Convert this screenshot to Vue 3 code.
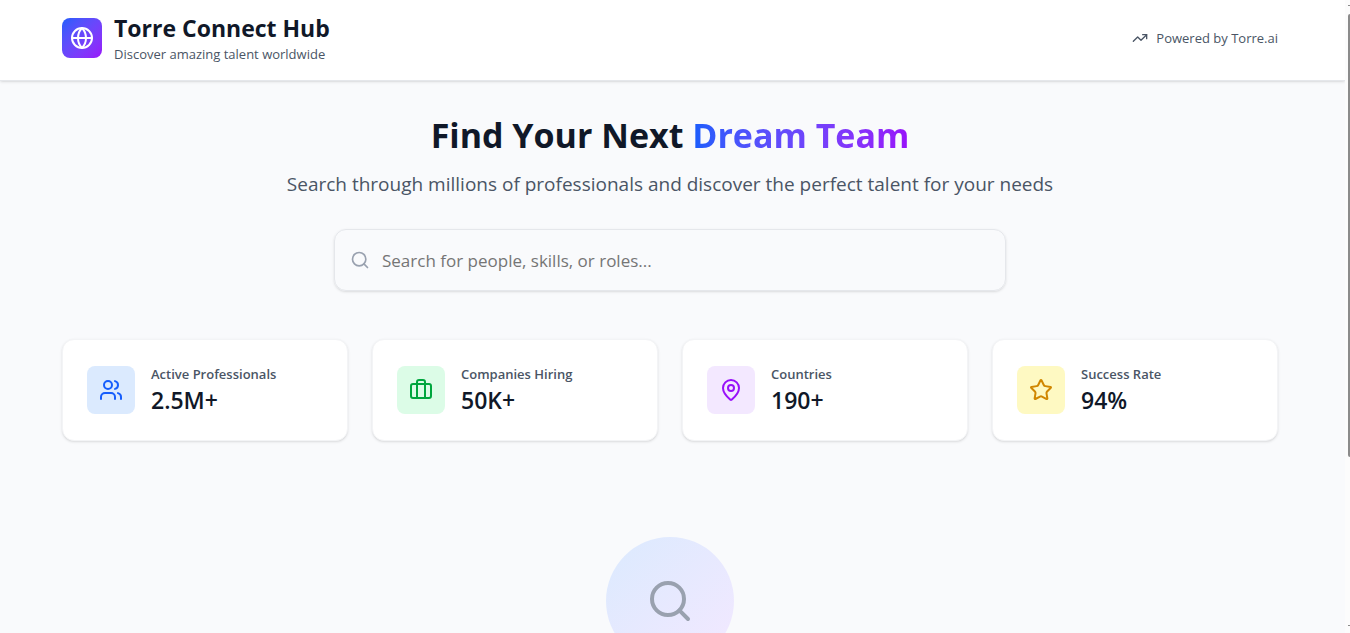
<script setup>
const stats = [
  { label: 'Active Professionals', value: '2.5M+', icon: 'users', tone: 'blue' },
  { label: 'Companies Hiring', value: '50K+', icon: 'briefcase', tone: 'green' },
  { label: 'Countries', value: '190+', icon: 'pin', tone: 'purple' },
  { label: 'Success Rate', value: '94%', icon: 'star', tone: 'yellow' },
]
</script>

<template>
  <div class="page">
    <header class="header">
      <div class="container header-row">
        <div class="brand">
          <div class="logo">
            <svg class="icon" viewBox="0 0 24 24" aria-hidden="true">
              <circle cx="12" cy="12" r="10" />
              <path d="M12 2a14.5 14.5 0 0 0 0 20 14.5 14.5 0 0 0 0-20" />
              <path d="M2 12h20" />
            </svg>
          </div>
          <div>
            <h1 class="brand-name">Torre Connect Hub</h1>
            <p class="tagline">Discover amazing talent worldwide</p>
          </div>
        </div>
        <div class="powered">
          <svg class="icon icon-small" viewBox="0 0 24 24" aria-hidden="true">
            <polyline points="22 7 13.5 15.5 8.5 10.5 2 17" />
            <polyline points="16 7 22 7 22 13" />
          </svg>
          <span>Powered by Torre.ai</span>
        </div>
      </div>
    </header>

    <main class="container main">
      <section class="hero">
        <h2 class="headline">Find Your Next <span class="gradient-text">Dream Team</span></h2>
        <p class="lead">Search through millions of professionals and discover the perfect talent for your needs</p>
        <label class="search">
          <svg class="icon search-icon" viewBox="0 0 24 24" aria-hidden="true">
            <circle cx="11" cy="11" r="8" />
            <path d="m21 21-4.3-4.3" />
          </svg>
          <input class="search-input" type="text" aria-label="Search for people, skills, or roles" placeholder="Search for people, skills, or roles..." />
        </label>
      </section>

      <section class="stats">
        <article v-for="stat in stats" :key="stat.label" class="card">
          <div class="badge" :class="stat.tone">
            <svg class="icon" viewBox="0 0 24 24" aria-hidden="true">
              <template v-if="stat.icon === 'users'">
                <path d="M16 21v-2a4 4 0 0 0-4-4H6a4 4 0 0 0-4 4v2" />
                <circle cx="9" cy="7" r="4" />
                <path d="M22 21v-2a4 4 0 0 0-3-3.87" />
                <path d="M16 3.13a4 4 0 0 1 0 7.75" />
              </template>
              <template v-else-if="stat.icon === 'briefcase'">
                <path d="M16 20V4a2 2 0 0 0-2-2h-4a2 2 0 0 0-2 2v16" />
                <rect width="20" height="14" x="2" y="6" rx="2" />
              </template>
              <template v-else-if="stat.icon === 'pin'">
                <path d="M20 10c0 4.993-5.539 10.193-7.399 11.799a1 1 0 0 1-1.202 0C9.539 20.193 4 14.993 4 10a8 8 0 0 1 16 0" />
                <circle cx="12" cy="10" r="3" />
              </template>
              <path
                v-else
                d="M11.525 2.295a.53.53 0 0 1 .95 0l2.31 4.679a2.123 2.123 0 0 0 1.595 1.16l5.166.756a.53.53 0 0 1 .294.904l-3.736 3.638a2.123 2.123 0 0 0-.611 1.878l.882 5.14a.53.53 0 0 1-.771.56l-4.618-2.428a2.122 2.122 0 0 0-1.973 0L6.396 21.01a.53.53 0 0 1-.77-.56l.881-5.139a2.122 2.122 0 0 0-.611-1.879L2.16 9.795a.53.53 0 0 1 .294-.906l5.165-.755a2.122 2.122 0 0 0 1.597-1.16z"
              />
            </svg>
          </div>
          <div>
            <p class="stat-label">{{ stat.label }}</p>
            <p class="stat-value">{{ stat.value }}</p>
          </div>
        </article>
      </section>

      <section class="empty">
        <div class="empty-circle">
          <svg class="icon icon-large" viewBox="0 0 24 24" aria-hidden="true">
            <circle cx="11" cy="11" r="8" />
            <path d="m21 21-4.3-4.3" />
          </svg>
        </div>
      </section>
    </main>

    <div class="scrollbar" aria-hidden="true">
      <i class="arrow"></i>
      <i class="thumb"></i>
      <i class="arrow"></i>
    </div>
  </div>
</template>

<style>
body {
  background: #f9fafb;
}
</style>

<style scoped>
* {
  box-sizing: border-box;
}

.page {
  height: 100vh;
  padding-right: 5px;
  overflow-y: auto;
  scrollbar-width: none;
  background: #f9fafc;
  color: #101828;
  font-family: "Segoe UI", "Open Sans", "Noto Sans", sans-serif;
  font-size: 14px;
  line-height: 20px;
}

h1,
h2,
p {
  margin: 0;
}

.header {
  padding: 12px 5px 16px 0;
  background: #fff;
  border-bottom: 1px solid #e5e7eb;
  box-shadow: 0 1px 3px rgb(0 0 0 / 10%), 0 1px 2px -1px rgb(0 0 0 / 10%);
}

.container {
  max-width: 1280px;
  margin: 0 auto;
  padding: 0 32px;
}

.header-row,
.brand,
.powered {
  display: flex;
  align-items: center;
}

.header-row {
  justify-content: space-between;
}

.brand {
  gap: 12px;
}

.logo {
  display: grid;
  place-items: center;
  width: 40px;
  height: 40px;
  border-radius: 8px;
  color: #fff;
  background: linear-gradient(to bottom right, #155dfc, #9810fa);
  background: linear-gradient(to bottom right in oklab, #155dfc, #9810fa);
}

.brand-name {
  font-size: 23px;
  line-height: 32px;
  font-weight: 700;
}

.tagline {
  font-size: 13px;
  color: #4a5565;
}

.powered {
  gap: 8px;
  font-size: 13px;
  color: #4a5565;
}

.icon {
  display: block;
  width: 24px;
  height: 24px;
  fill: none;
  stroke: currentColor;
  stroke-width: 2;
  stroke-linecap: round;
  stroke-linejoin: round;
}

.icon-small {
  width: 16px;
  height: 16px;
}

.icon-large {
  width: 48px;
  height: 48px;
}

.main {
  position: relative;
  max-width: 1285px;
  padding: 32px 37px 32px 32px;
}

.hero {
  text-align: center;
}

.headline {
  margin-bottom: 12px;
  font-size: 34px;
  line-height: 44px;
  font-weight: 700;
}

.gradient-text {
  color: transparent;
  background: linear-gradient(to right, #155dfc, #9810fa);
  background: linear-gradient(to right in oklab, #155dfc, #9810fa);
  background-clip: text;
}

.lead {
  margin-bottom: 30px;
  font-size: 19px;
  line-height: 30px;
  color: #4a5565;
}

.search {
  display: flex;
  align-items: center;
  gap: 12px;
  max-width: 672px;
  margin: 0 auto 48px;
  padding: 0 15px;
  border: 1px solid #e5e7eb;
  border-radius: 12px;
  box-shadow: 0 1px 3px rgb(0 0 0 / 10%), 0 1px 2px -1px rgb(0 0 0 / 10%);
}

.search-icon {
  width: 20px;
  height: 20px;
  color: #99a1af;
}

.search-input {
  flex: 1;
  min-width: 0;
  height: 60px;
  padding: 0;
  border: 0;
  outline: 0;
  background: transparent;
  font: inherit;
  font-size: 17px;
  color: #101828;
}

.search-input::placeholder {
  color: #757575;
  opacity: 1;
}

.stats {
  display: grid;
  grid-template-columns: repeat(4, 1fr);
  gap: 24px;
}

.card {
  display: flex;
  align-items: center;
  gap: 16px;
  padding: 24px;
  border: 1px solid #f3f4f6;
  border-radius: 12px;
  background: #fff;
  box-shadow: 0 1px 3px rgb(0 0 0 / 10%), 0 1px 2px -1px rgb(0 0 0 / 10%);
}

.badge {
  display: grid;
  place-items: center;
  flex: none;
  width: 48px;
  height: 48px;
  border-radius: 8px;
}

.blue {
  color: #155dfc;
  background: #dbeafe;
}

.green {
  color: #00a63e;
  background: #dcfce7;
}

.purple {
  color: #9810fa;
  background: #f3e8ff;
}

.yellow {
  color: #d08700;
  background: #fef9c2;
}

.stat-label {
  font-size: 13px;
  font-weight: 600;
  color: #4a5565;
}

.stat-value {
  font-size: 23px;
  line-height: 32px;
  font-weight: 600;
}

.empty {
  padding: 96px 0 48px;
}

.empty-circle {
  display: grid;
  place-items: center;
  width: 128px;
  height: 128px;
  margin: 0 auto;
  border-radius: 50%;
  color: #99a1af;
  background: linear-gradient(to bottom right, #dbeafe, #f3e8ff);
}

.scrollbar {
  position: fixed;
  top: 0;
  right: 0;
  bottom: 0;
  display: flex;
  flex-direction: column;
  align-items: flex-end;
  width: 5px;
  padding: 5px 0 7px;
  background: #fcfcfc;
}

.arrow {
  width: 2px;
  height: 1px;
  background: #8b8b8b;
}

.thumb {
  width: 2px;
  height: 70vh;
  margin: 8px 0 auto;
  border-radius: 2px 0 0 2px;
  background: #8b8b8b;
}
</style>
